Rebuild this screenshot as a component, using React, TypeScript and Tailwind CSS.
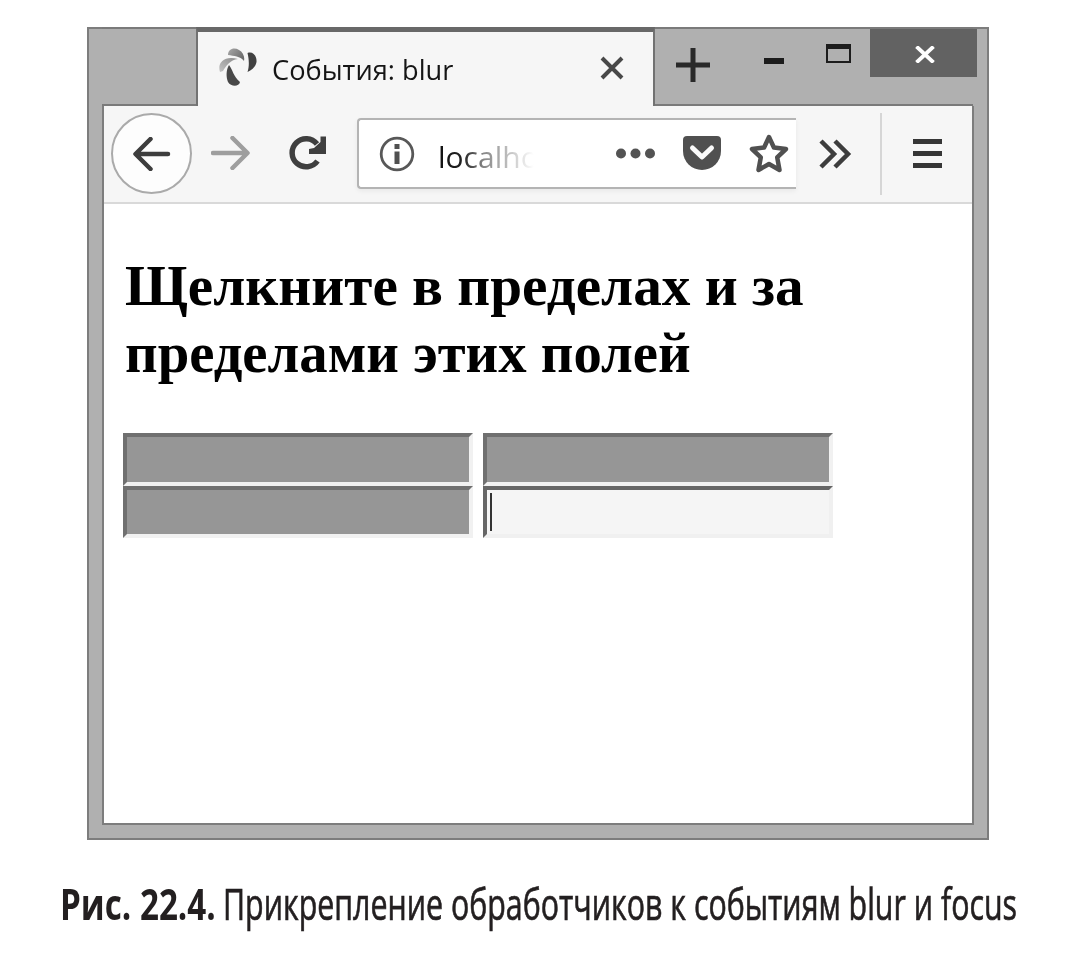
import type { ReactNode } from "react";

function Icon({ w, h, className = "", children }: { w: number; h: number; className?: string; children: ReactNode }) {
  return (
    <svg width={w} height={h} viewBox={`0 0 ${w} ${h}`} fill="none" className={`block shrink-0 ${className}`}>
      {children}
    </svg>
  );
}

function TabStrip() {
  return (
    <div className="flex h-[79px] shrink-0">
      <div className="w-[15px] border-l-2 border-t-2 border-[#7d7d7d]" />
      <div className="w-[94px] border-t-2 border-b-2 border-[#7a7a7a]" />
      <div className="flex w-[459px] border-x-2 border-t-[5px] border-x-[#727272] border-t-[#686868] bg-[#f6f6f6]">
        <Icon w={39} h={40} className="mt-[16px] ml-[21px]">
          <defs>
            <linearGradient id="petalTop" x1="0" y1="0" x2="1" y2="0.6">
              <stop offset="0" stopColor="#a8a8a8" />
              <stop offset="1" stopColor="#6c6c6c" />
            </linearGradient>
            <linearGradient id="petalLeft" x1="0" y1="1" x2="1" y2="0">
              <stop offset="0" stopColor="#c4c4c4" />
              <stop offset="1" stopColor="#8a8a8a" />
            </linearGradient>
          </defs>
          <path d="M9 7C9 1 15 -1 20 2C24 4 26 9 25 13C21 8 15 8 9 7Z" fill="url(#petalTop)" />
          <path d="M1 24C-2 15 5 7 19 11C11 12 7 18 4 23Z" fill="url(#petalLeft)" />
          <path d="M10 17C14 22 14 28 21 34C20 39 12 39 9 34C7 29 7 22 10 17Z" fill="#484848" />
          <path d="M28.500 5C34 3 38 8 37.500 14C36.500 19 33 22 28.500 24C30.500 18 30 11 28.500 5Z" fill="#414141" />
        </Icon>
        <div className="mt-[15px] ml-[14px] w-[200px] whitespace-nowrap font-['Open_Sans',sans-serif] text-[28px] leading-[44px] text-[#151515]">
          <span className="inline-block origin-left scale-x-[0.972]">События: blur</span>
        </div>
        <Icon w={24} h={24} className="mt-[24px] ml-[128px]">
          <path d="M2 2L22 22M22 2L2 22" stroke="#484848" strokeWidth="4" />
        </Icon>
      </div>
      <div className="flex w-[318px] border-t-2 border-b-2 border-[#7a7a7a]">
        <Icon w={34} h={34} className="mt-[19px] ml-[21px]">
          <path d="M17 0V34M0 17H34" stroke="#292929" strokeWidth="5" />
        </Icon>
        <div className="mt-[29px] ml-[54px] h-[6px] w-[20px] shrink-0 bg-[#1c1c1c]" />
        <div className="mt-[15px] ml-[42px] h-[19px] w-[25px] shrink-0 border-2 border-t-[5px] border-[#1c1c1c]" />
        <div className="mr-[-4px] ml-[19px] h-[48px] w-[107px] shrink-0 bg-[#626262] pt-[17px] pl-[45px]">
          <Icon w={20} h={17}>
            <path d="M1.5 0.5L18.5 16.5M18.5 0.5L1.5 16.5" stroke="#fff" strokeWidth="3.8" />
          </Icon>
        </div>
      </div>
      <div className="w-[16px] border-t-2 border-r-2 border-[#7d7d7d]" />
    </div>
  );
}

function Toolbar() {
  return (
    <div className="flex h-[98px] shrink-0 border-b-2 border-[#d9d9d9] bg-[#f6f6f6]">
      <div className="mt-[7px] ml-[7px] flex h-[81px] w-[81px] shrink-0 items-center justify-center rounded-full border-2 border-[#aaa] bg-[#fdfdfd]">
        <Icon w={38} h={34}>
          <path d="M35 17H3M17.500 2L2.500 17L17.500 32" stroke="#3d3d3d" strokeWidth="4.500" strokeLinecap="round" strokeLinejoin="round" />
        </Icon>
      </div>
      <Icon w={39} h={34} className="mt-[30px] ml-[19px]">
        <path d="M2 17H36M21.500 2L36.500 17L21.500 32" stroke="#9e9e9e" strokeWidth="4.500" strokeLinecap="round" strokeLinejoin="round" />
      </Icon>
      <Icon w={38} h={36} className="mt-[29px] ml-[39px]">
        <path d="M28.500 26A14 14 0 1 1 28 9" stroke="#3f3f3f" strokeWidth="5.500" />
        <path d="M37 1.500V19H20V14L25 13L31.500 7V1.500Z" fill="#3f3f3f" />
      </Icon>
      <div className="mt-[12px] ml-[30px] flex h-[71px] w-[439px] shrink-0 rounded-l-[4px] border-y-2 border-l-2 border-[#b4b4b4] bg-white shadow-[0_2px_5px_rgba(0,0,0,0.06)]">
        <Icon w={36} h={36} className="mt-[16px] ml-[20px]">
          <circle cx="18" cy="18" r="15.800" stroke="#585858" strokeWidth="2.800" />
          <path d="M18 8V13M18 15.500V28" stroke="#505050" strokeWidth="5" />
        </Icon>
        <div className="mt-[13px] ml-[23px] h-[50px] w-[104px] whitespace-nowrap bg-[linear-gradient(90deg,#111_0%,#222_24%,#888_44%,#bbb_66%,#fff_92%)] bg-clip-text font-['Open_Sans',sans-serif] text-[30px] leading-[48px] text-transparent">
          localho
        </div>
        <Icon w={39} h={12} className="mt-[28px] ml-[74px]">
          <circle cx="5" cy="5.500" r="5" fill="#535353" />
          <circle cx="19.500" cy="5.500" r="5" fill="#535353" />
          <circle cx="34" cy="5.500" r="5" fill="#535353" />
        </Icon>
        <Icon w={38} h={34} className="mt-[16px] ml-[28px]">
          <path d="M4 0H34Q38 0 38 4V15A19 19 0 0 1 0 15V4Q0 0 4 0Z" fill="#505050" />
          <path d="M9.500 12L19 21L28.500 12" stroke="#fafafa" strokeWidth="5" strokeLinecap="round" strokeLinejoin="round" />
        </Icon>
        <Icon w={40} h={40} className="mt-[14px] ml-[28px]">
          <path d="M20 3L24.900 13.500L37 15L28.200 23.400L30.500 36L20 30L9.500 36L11.800 23.400L3 15L15.100 13.500Z" stroke="#505050" strokeWidth="4.500" strokeLinejoin="round" />
        </Icon>
      </div>
      <Icon w={34} h={30} className="mt-[33px] ml-[22px]">
        <path d="M3 2L16 15L3 28M17 2L30 15L17 28" stroke="#3d3d3d" strokeWidth="4.500" />
      </Icon>
      <div className="mt-[7px] ml-[28px] h-[82px] w-[2px] shrink-0 bg-[#d6d6d6]" />
      <div className="mt-[33px] ml-[31px] flex w-[29px] flex-col gap-[7px]">
        <div className="h-[5px] bg-[#363636]" />
        <div className="h-[5px] bg-[#363636]" />
        <div className="h-[5px] bg-[#363636]" />
      </div>
    </div>
  );
}

function Field({ focused = false }: { focused?: boolean }) {
  return (
    <div
      className={
        focused
          ? "h-[52.500px] w-[350px] border-4 border-t-[#666] border-l-[#666] border-r-[#f0f0f0] border-b-[#f0f0f0] bg-[#f5f5f5] pt-[3px] pl-[3px]"
          : "h-[52.500px] w-[350px] border-4 border-t-[#707070] border-l-[#707070] border-r-[#f1f1f1] border-b-[#f1f1f1] bg-[#969696]"
      }
    >
      {focused && <div className="h-[38px] w-[2px] bg-[#333]" />}
    </div>
  );
}

export default function App() {
  return (
    <div className="h-[966px] w-[1084px] overflow-hidden bg-white pt-[27px]">
      <div className="ml-[87px] flex h-[813px] w-[902px] flex-col bg-[#b0b0b0]">
        <TabStrip />
        <div className="flex grow border-x-2 border-b-2 border-[#7d7d7d] px-[13px] pb-[13px]">
          <div className="flex w-[872px] flex-col border-x-2 border-b-2 border-[#7d7d7d] bg-white">
            <Toolbar />
            <h2 className="mt-[48px] ml-[21px] whitespace-nowrap font-['Liberation_Serif',serif] text-[57px] leading-[67px] font-bold text-black">
              <span className="inline-block origin-left scale-x-[1.004]">Щелкните в пределах и за</span>
              <br />
              <span className="inline-block origin-left scale-x-[0.995]">пределами этих полей</span>
            </h2>
            <div className="mt-[47px] ml-[19px] grid w-[710px] grid-cols-2 gap-x-[10px]">
              <Field />
              <Field />
              <Field />
              <Field focused />
            </div>
          </div>
        </div>
      </div>
      <div className="mt-[34px] ml-[60px] flex h-[60px] whitespace-nowrap font-['Open_Sans',sans-serif] text-[43px] leading-[60px] text-[#231f20]">
        <div className="w-[163px]">
          <span className="inline-block origin-left scale-x-[0.772] font-bold">Рис. 22.4.</span>
        </div>
        <div className="w-[800px]">
          <span className="inline-block origin-left scale-x-[0.706] [-webkit-text-stroke:0.7px_#231f20]">
            Прикрепление обработчиков к событиям blur и focus
          </span>
        </div>
      </div>
    </div>
  );
}
